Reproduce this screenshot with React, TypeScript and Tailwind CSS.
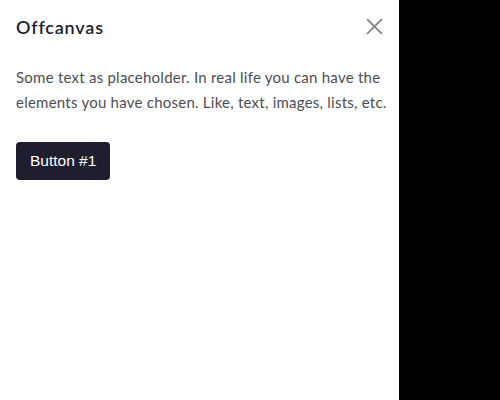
import React from "react";

export default function App() {
  return (
    <div className="flex h-[400px] w-[500px] bg-black" style={{ fontFamily: "Lato, 'Noto Sans', sans-serif" }}>
      <div className="flex h-full w-[399px] flex-col bg-white">
        <div className="flex h-[52px] items-center justify-between pl-4 pr-[15px]">
          <h5 className="pt-[1px] text-[18px] font-semibold leading-none tracking-[0.8px] text-[#1f1e2e]">Offcanvas</h5>
          <button className="flex h-5 w-5 items-center justify-center text-[#808080]" aria-label="Close">
            <svg width="17" height="17" viewBox="0 0 16 16" fill="none" stroke="currentColor" strokeWidth="1.6">
              <path d="M1 1L15 15M15 1L1 15" />
            </svg>
          </button>
        </div>
        <div className="pl-4 pr-2 pt-[13px]">
          <p className="text-[15px] leading-[25px] tracking-[0.24px] text-[#4d4d55]">
            Some text as placeholder. In real life you can have the elements you have chosen. Like, text, images, lists, etc.
          </p>
          <button
            className="mt-[27px] h-[38px] rounded-[4px] bg-[#1f1e2e] px-[14px] text-[15.5px] text-white"
            style={{ fontFamily: "'Liberation Sans', Arial, sans-serif" }}
          >
            Button #1
          </button>
        </div>
      </div>
    </div>
  );
}
